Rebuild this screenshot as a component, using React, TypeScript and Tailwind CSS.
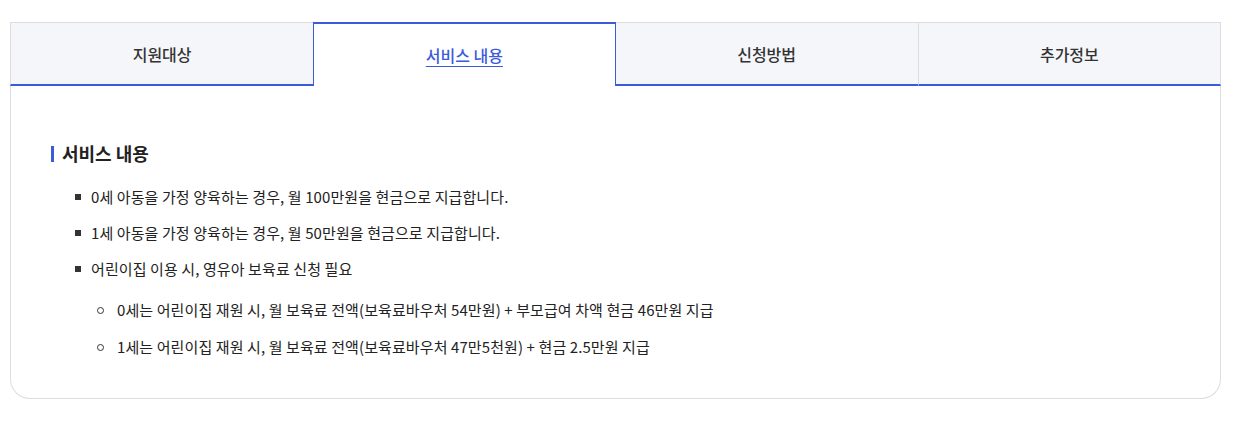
import React from "react";

const tabs = ["지원대상", "서비스 내용", "신청방법", "추가정보"];

export default function App() {
  const active = 1;
  return (
    <div
      className="w-[1255px] h-[430px] bg-white pt-[22px] px-[10px]"
      style={{ fontFamily: '"Noto Sans CJK KR", "Noto Sans", sans-serif' }}
    >
      <div className="w-[1211px] border border-t-0 border-[#dddddd] rounded-b-[20px] bg-white">
        <div className="grid grid-cols-4">
          {tabs.map((t, i) => {
            const isActive = i === active;
            return (
              <div
                key={t}
                className={
                  isActive
                    ? "h-[64px] flex items-center justify-center bg-white border-t-2 border-x border-[#3b5bdb] relative z-10 text-[16px] font-medium text-[#3b5bdb] underline underline-offset-[4px]"
                    : "h-[64px] flex items-center justify-center bg-[#f5f6fa] border-t border-[#dddddd] border-b-2 border-b-[#3b5bdb] text-[16px] font-medium text-[#333333]" +
                      (i === 3 ? " border-l border-l-[#dddddd]" : "") +
                      (i === 0 ? " -ml-px border-l border-l-[#dddddd]" : "") +
                      (i === 3 ? " -mr-px border-r border-r-[#dddddd]" : "")
                }
              >
                {t}
              </div>
            );
          })}
        </div>
        <div className="pl-[40px] pr-[40px] pt-[54px] pb-[40px]">
          <div className="flex items-center gap-[8px]">
            <span className="w-[3px] h-[16px] bg-[#3b5bdb]" />
            <h2 className="text-[18px] font-bold text-[#222222] leading-[27px]">
              서비스 내용
            </h2>
          </div>
          <ul className="mt-[19px] pl-[24px] text-[15px] text-[#222222] tracking-[0.1px] leading-[22px]">
            {[
              "0세 아동을 가정 양육하는 경우, 월 100만원을 현금으로 지급합니다.",
              "1세 아동을 가정 양육하는 경우, 월 50만원을 현금으로 지급합니다.",
              "어린이집 이용 시, 영유아 보육료 신청 필요",
            ].map((s) => (
              <li key={s} className="flex items-center gap-[10px] mt-[14px] first:mt-0">
                <span className="w-[6px] h-[6px] bg-[#333333]" />
                <span>{s}</span>
              </li>
            ))}
            <ul className="pl-[22px] mt-[19px]">
              {[
                "0세는 어린이집 재원 시, 월 보육료 전액(보육료바우처 54만원) + 부모급여 차액 현금 46만원 지급",
                "1세는 어린이집 재원 시, 월 보육료 전액(보육료바우처 47만5천원) + 현금 2.5만원 지급",
              ].map((s) => (
                <li key={s} className="flex items-center gap-[13px] mt-[15px] first:mt-0">
                  <span className="w-[7px] h-[7px] rounded-full border border-[#333333]" />
                  <span>{s}</span>
                </li>
              ))}
            </ul>
          </ul>
        </div>
      </div>
    </div>
  );
}
